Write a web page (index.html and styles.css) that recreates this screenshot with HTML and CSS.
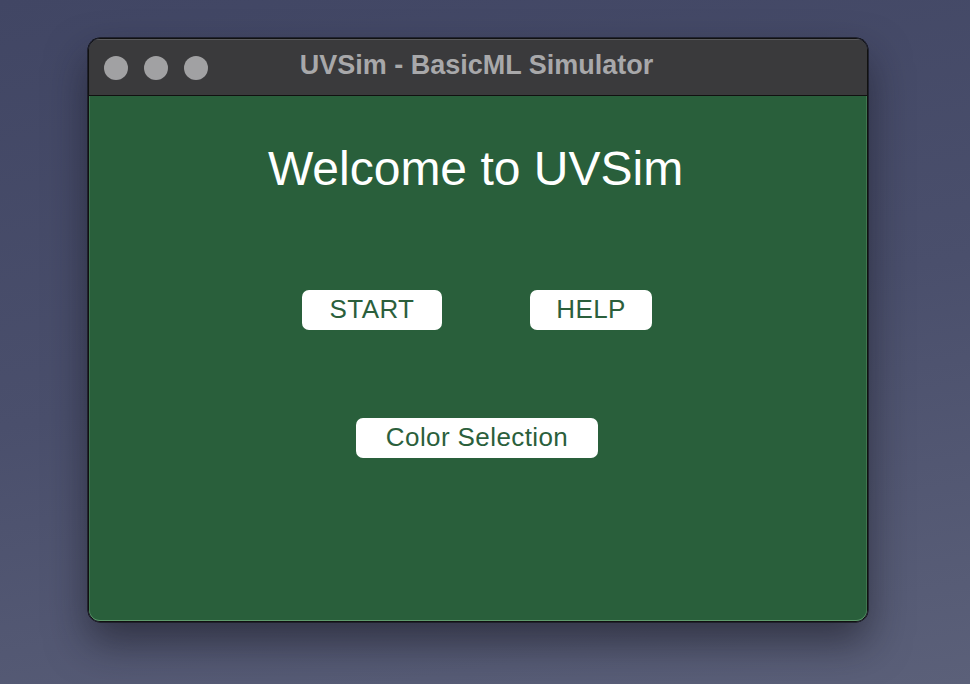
FILE: index.html
```html
<!DOCTYPE html>
<html>
<head>
<meta charset="utf-8">
<link rel="stylesheet" href="styles.css">
</head>
<body>
<div class="window">
  <div class="titlebar">
    <div class="lights">
      <span class="light"></span><span class="light"></span><span class="light"></span>
    </div>
    <div class="title">UVSim - BasicML Simulator</div>
  </div>
  <div class="content">
    <h1 class="heading">Welcome to UVSim</h1>
    <div class="row">
      <button class="btn btn-start">START</button>
      <button class="btn btn-help">HELP</button>
    </div>
    <div class="row row2">
      <button class="btn btn-color">Color Selection</button>
    </div>
  </div>
</div>
</body>
</html>
```
FILE: styles.css
```css
html, body {
  margin: 0;
  padding: 0;
  width: 970px;
  height: 684px;
  overflow: hidden;
}
body {
  background: linear-gradient(170deg, #414664 0%, #4a4f6c 50%, #5b6079 100%);
  font-family: "Liberation Sans", Arial, sans-serif;
  padding-top: 38px;
  padding-left: 88px;
  box-sizing: border-box;
}
.window {
  width: 780px;
  height: 584px;
  box-sizing: border-box;
  border: 1px solid #111;
  border-radius: 12px;
  overflow: hidden;
  display: flex;
  flex-direction: column;
  box-shadow: 0 20px 40px rgba(20, 20, 30, 0.55), 0 0 0 0.5px #000;
}
.titlebar {
  height: 56px;
  background: #3a3a3c;
  border-bottom: 1px solid #111;
  display: flex;
  align-items: center;
  position: relative;
  flex-shrink: 0;
  box-shadow: inset 0 1px 0 #5a5a5c;
}
.lights {
  display: flex;
  gap: 16px;
  padding-left: 15px;
  padding-top: 2px;
}
.light {
  width: 24px;
  height: 24px;
  border-radius: 50%;
  background: #a1a1a3;
}
.title {
  position: absolute;
  left: 0;
  right: 0;
  top: 11px;
  text-align: center;
  color: #a8a8aa;
  font-weight: bold;
  font-size: 27px;
  pointer-events: none;
  padding-right: 3px;
}
.content {
  flex: 1;
  background: #295f3b;
  display: flex;
  flex-direction: column;
  align-items: center;
  border-radius: 0 0 11px 11px;
  box-shadow: inset 0 -1px 0 #5f9a6c, inset 1px 0 0 #3f7650, inset -1px 0 0 #3f7650;
}
.heading {
  margin: 45px 0 0 0;
  padding-right: 5px;
  color: #ffffff;
  font-weight: normal;
  font-size: 48px;
  line-height: 56px;
}
.row {
  display: flex;
  gap: 88px;
  margin-top: 93px;
  padding-right: 2px;
}
.row2 {
  margin-top: 88px;
}
.btn {
  height: 40px;
  background: #ffffff;
  border: none;
  border-radius: 7px;
  color: #2b5f3c;
  font-family: "Liberation Sans", Arial, sans-serif;
  font-size: 26px;
  letter-spacing: 0.4px;
  padding: 0 0 2px 0;
  box-sizing: border-box;
  display: flex;
  align-items: center;
  justify-content: center;
}
.btn-start { width: 140px; }
.btn-help { width: 122px; }
.btn-color { width: 242px; }
```
